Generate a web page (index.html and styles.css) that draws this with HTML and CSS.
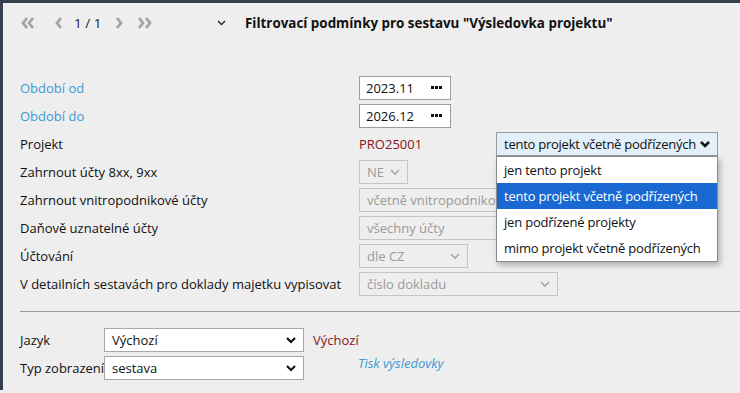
FILE: index.html
```html
<!DOCTYPE html>
<html>
<head>
<link rel="stylesheet" href="styles.css">
</head>
<body>

<div class="frame">
  <div class="toolbar">
    <div class="pager">
      <svg class="nav" width="14" height="12" viewBox="0 0 14 12"><path d="M6 1 L2 6 L6 11 M12 1 L8 6 L12 11"/></svg>
      <svg class="nav single" width="8" height="12" viewBox="0 0 8 12"><path d="M6 1 L2 6 L6 11"/></svg>
      <span class="pages">1 / 1</span>
      <svg class="nav single" width="8" height="12" viewBox="0 0 8 12"><path d="M2 1 L6 6 L2 11"/></svg>
      <svg class="nav" width="16" height="12" viewBox="0 0 16 12"><path d="M2 1 L6 6 L2 11 M9 1 L13 6 L9 11"/></svg>
    </div>
    <svg class="toggle" width="9" height="6" viewBox="0 0 9 6"><path d="M1 1 L4.5 4.5 L8 1"/></svg>
    <h1 class="title">Filtrovací podmínky pro sestavu "Výsledovka projektu"</h1>
  </div>

  <div class="filters">
    <label class="lbl link">Období od</label>
    <div class="period"><span>2023.11</span><svg width="11" height="4" viewBox="0 0 11 4"><rect x="0" y="0" width="3" height="3"/><rect x="4" y="0" width="3" height="3"/><rect x="8" y="0" width="3" height="3"/></svg></div>

    <label class="lbl link">Období do</label>
    <div class="period"><span>2026.12</span><svg width="11" height="4" viewBox="0 0 11 4"><rect x="0" y="0" width="3" height="3"/><rect x="4" y="0" width="3" height="3"/><rect x="8" y="0" width="3" height="3"/></svg></div>

    <label class="lbl">Projekt</label>
    <div class="project">
      <span class="code">PRO25001</span>
      <div class="menu-wrap">
        <div class="sel active w-project"><span>tento projekt včetně podřízených</span><svg class="chev" width="10" height="7" viewBox="0 0 10 7"><path d="M1 1 L5 5 L9 1"/></svg></div>
        <ul class="menu">
          <li>jen tento projekt</li>
          <li class="hl">tento projekt včetně podřízených</li>
          <li>jen podřízené projekty</li>
          <li>mimo projekt včetně podřízených</li>
        </ul>
      </div>
    </div>

    <label class="lbl">Zahrnout účty 8xx, 9xx</label>
    <div class="sel off w-ne"><span>NE</span><svg class="chev" width="10" height="7" viewBox="0 0 10 7"><path d="M1 1 L5 5 L9 1"/></svg></div>

    <label class="lbl">Zahrnout vnitropodnikové účty</label>
    <div class="sel off w-wide"><span>včetně vnitropodnikových</span><svg class="chev" width="10" height="7" viewBox="0 0 10 7"><path d="M1 1 L5 5 L9 1"/></svg></div>

    <label class="lbl">Daňově uznatelné účty</label>
    <div class="sel off w-wide"><span>všechny účty</span><svg class="chev" width="10" height="7" viewBox="0 0 10 7"><path d="M1 1 L5 5 L9 1"/></svg></div>

    <label class="lbl">Účtování</label>
    <div class="sel off w-cz"><span>dle CZ</span><svg class="chev" width="10" height="7" viewBox="0 0 10 7"><path d="M1 1 L5 5 L9 1"/></svg></div>

    <label class="lbl">V detailních sestavách pro doklady majetku vypisovat</label>
    <div class="sel off w-doc"><span>číslo dokladu</span><svg class="chev" width="10" height="7" viewBox="0 0 10 7"><path d="M1 1 L5 5 L9 1"/></svg></div>
  </div>

  <hr class="sep">

  <div class="output">
    <label class="lbl">Jazyk</label>
    <div class="sel w-out"><span>Výchozí</span><svg class="chev" width="10" height="7" viewBox="0 0 10 7"><path d="M1 1 L5 5 L9 1"/></svg></div>
    <span class="code lang">Výchozí</span>

    <label class="lbl">Typ zobrazení</label>
    <div class="sel w-out"><span>sestava</span><svg class="chev" width="10" height="7" viewBox="0 0 10 7"><path d="M1 1 L5 5 L9 1"/></svg></div>
    <a class="print">Tisk výsledovky</a>
  </div>
</div>

</body>
</html>
```

FILE: styles.css
```css
body {
  margin: 0;
  font-family: "Open Sans", "Noto Sans", sans-serif;
  font-size: 13px;
  color: #111;
  background: #eeeeee;
}

.frame {
  border-top: 3px solid #353f50;
  border-left: 3px solid #353f50;
  min-height: 390px;
  background: #eeeeee;
  box-sizing: border-box;
}

.toolbar {
  display: flex;
  align-items: center;
  height: 40px;
  padding-left: 18px;
}

.pager {
  display: flex;
  align-items: center;
  width: 196px;
}

.nav path {
  fill: none;
  stroke: #a3a3a3;
  stroke-width: 2.8;
}

.nav {
  margin-right: 20px;
}

.nav.single {
  margin-right: 14px;
}

.pages {
  color: #222;
  font-size: 13.5px;
  margin-right: 14px;
  margin-left: -3px;
}

.toggle path {
  fill: none;
  stroke: #222;
  stroke-width: 1.3;
}

.toggle {
  margin-right: 19px;
}

.title {
  font-size: 13.4px;
  font-weight: bold;
  margin: 0;
  color: #111;
}

.filters {
  display: grid;
  grid-template-columns: 339px auto;
  grid-auto-rows: 24px;
  row-gap: 4px;
  padding: 33px 0 0 17px;
  align-items: center;
}

.lbl {
  color: #111;
  white-space: nowrap;
}

.lbl.link {
  color: #3a9ad6;
}

.period {
  width: 92px;
  height: 24px;
  box-sizing: border-box;
  border: 1px solid #9c9c9c;
  background: #fff;
  display: flex;
  align-items: center;
  justify-content: space-between;
  padding: 0 8px 0 6px;
}

.period svg rect {
  fill: #111;
}

.project {
  display: flex;
  align-items: center;
}

.code {
  color: #8a1420;
  width: 137px;
}

.menu-wrap {
  position: relative;
}

.sel {
  height: 24px;
  box-sizing: border-box;
  border: 1px solid #a8a8a8;
  background: #fff;
  display: flex;
  align-items: center;
  justify-content: space-between;
  padding: 0 7px 0 7px;
  overflow: hidden;
  white-space: nowrap;
}

.chev path {
  fill: none;
  stroke: #111;
  stroke-width: 2.2;
}

.sel.active {
  background: #e3eff9;
  border-color: #9a9a9a;
  letter-spacing: -0.25px;
}

.sel.active .chev path {
  stroke-width: 2.6;
}

.sel.off {
  border-color: #c6c6c6;
  background: #eeeeee;
  color: #9a9a9a;
}

.sel.off .chev path {
  stroke: #a8a8a8;
  stroke-width: 1.6;
}

.w-project { width: 222px; }
.w-ne { width: 49px; }
.w-wide { width: 190px; }
.w-cz { width: 109px; }
.w-doc { width: 199px; }
.w-out { width: 200px; }

.menu {
  position: absolute;
  top: 24px;
  left: 0;
  width: 222px;
  box-sizing: border-box;
  margin: 0;
  padding: 0;
  list-style: none;
  background: #fff;
  border: 1px solid #8a8a8a;
  box-shadow: 2px 3px 6px rgba(0, 0, 0, 0.28);
  z-index: 5;
}

.menu li {
  height: 26px;
  line-height: 26px;
  padding-left: 7px;
  color: #111;
  white-space: nowrap;
  letter-spacing: -0.2px;
}

.menu li.hl {
  background: #1a68d1;
  color: #fff;
}

.sep {
  border: none;
  border-top: 1px solid #9a9a9a;
  margin: 15px 0 0 17px;
  height: 0;
}

.output {
  display: grid;
  grid-template-columns: 84px 200px auto;
  grid-auto-rows: 24px;
  row-gap: 4px;
  padding: 16px 0 0 17px;
  align-items: center;
}

.lang {
  padding-left: 9px;
}

.print {
  color: #3a9ad6;
  font-style: italic;
  padding-left: 54px;
  align-self: start;
  line-height: 15px;
}
```
